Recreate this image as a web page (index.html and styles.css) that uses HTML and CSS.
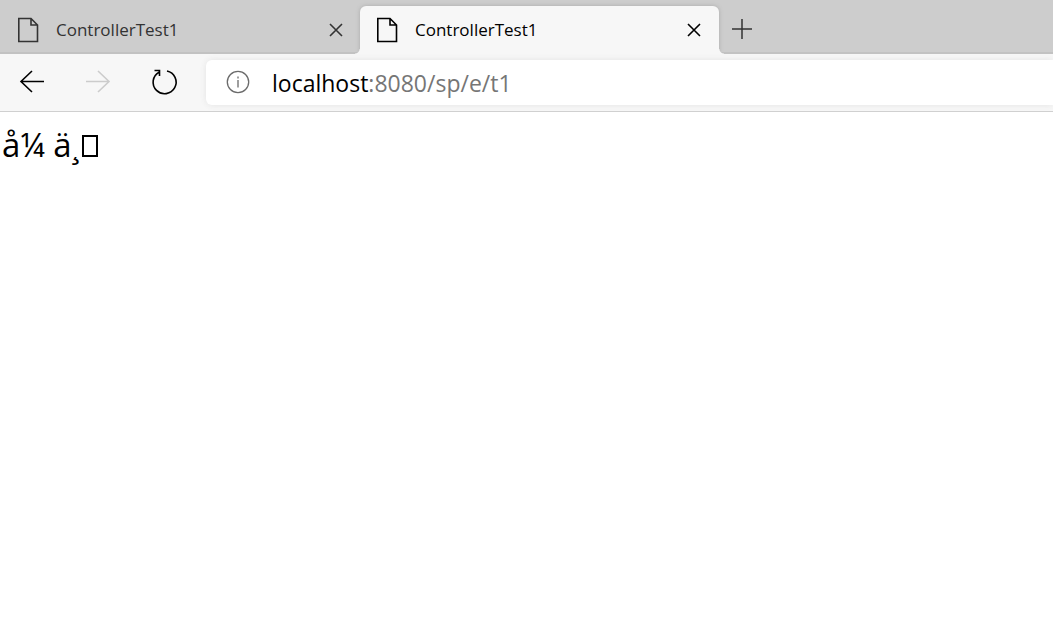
FILE: index.html
```html
<!DOCTYPE html>
<html lang="en">
<head>
<meta charset="utf-8">
<title>ControllerTest1</title>
<link rel="stylesheet" href="styles.css">
</head>
<body>
<svg class="symbols" aria-hidden="true">
  <symbol id="page" viewBox="0 0 22 26"><path d="M1.800 1.500H14L20.500 8V24.500H1.800ZM14 1.500V8H20.500"/></symbol>
  <symbol id="close" viewBox="0 0 14 14"><path d="M1 1L13 13M13 1L1 13"/></symbol>
</svg>
<header class="browser">
  <nav class="tabs" aria-label="Tabs">
    <div class="tab">
      <svg class="page-icon"><use href="#page"/></svg>
      <span class="title">ControllerTest1</span>
      <button class="close" aria-label="Close tab"><svg class="close-icon"><use href="#close"/></svg></button>
    </div>
    <div class="tab active">
      <svg class="page-icon"><use href="#page"/></svg>
      <span class="title">ControllerTest1</span>
      <button class="close" aria-label="Close tab"><svg class="close-icon"><use href="#close"/></svg></button>
    </div>
    <button class="new-tab" aria-label="New tab"><svg class="plus-icon" viewBox="0 0 20 20"><path d="M10 0V20M0 10H20"/></svg></button>
  </nav>
  <div class="toolbar">
    <div class="controls">
      <button class="tool" aria-label="Back"><svg class="tool-icon" viewBox="0 0 28 28"><path d="M26 12.500H3M14 2L3 12.500L14 23"/></svg></button>
      <button class="tool" aria-label="Forward" disabled><svg class="tool-icon" viewBox="0 0 28 28"><path d="M2 12.500H25M14 2L25 12.500L14 23"/></svg></button>
      <button class="tool" aria-label="Refresh"><svg class="tool-icon" viewBox="0 0 28 28"><path d="M17 2A11.500 11.500 0 1 1 9 3.200M4.500 1.500H9.500V7"/></svg></button>
    </div>
    <div class="address">
      <button class="info" aria-label="Site information"><svg class="info-icon" viewBox="0 0 24 24"><circle cx="12" cy="11" r="10.700"/><path d="M12 9V16.500M12 5.500V7.500"/></svg></button>
      <div class="url" role="textbox" contenteditable="true" spellcheck="false" aria-label="Address"><span class="host">localhost</span>:8080/sp/e/t1</div>
    </div>
  </div>
</header>
<main class="content">å¼ ä¸<span class="missing" role="img" aria-label="Unknown character"></span></main>
</body>
</html>
```

FILE: styles.css
```css
* { box-sizing: border-box; }
body {
  margin: 0;
  background: #fff;
  color: #000;
  font-family: "Open Sans", "Noto Sans", sans-serif;
}
button {
  display: flex;
  align-items: center;
  justify-content: center;
  padding: 0;
  border: 0;
  background: none;
  color: inherit;
}
svg {
  display: block;
  flex: none;
  overflow: visible;
  fill: none;
  stroke: currentColor;
}
.symbols { display: none; }
.tabs {
  display: flex;
  height: 54px;
  padding-top: 6px;
  background: linear-gradient(#cdcdcd 52px, #c2c2c2 52px);
  color: #333;
}
.tab {
  display: flex;
  align-items: center;
  flex: 0 1 360px;
  min-width: 0;
  padding: 0 16px 0 17px;
}
.active {
  position: relative;
  flex-basis: 359px;
  padding: 0 17px 0 16px;
  border-radius: 6px 6px 0 0;
  background: #f7f7f7;
  box-shadow: 0 0 4px #aaa;
  clip-path: inset(-6px -6px 0 -6px);
  color: #000;
}
.active::before,
.active::after {
  content: "";
  position: absolute;
  bottom: 0;
  width: 5px;
  height: 5px;
}
.active::before {
  right: 100%;
  background: radial-gradient(circle at 0 0, transparent 4px, #f7f7f7 5px);
}
.active::after {
  left: 100%;
  background: radial-gradient(circle at 100% 0, transparent 4px, #f7f7f7 5px);
}
.page-icon {
  width: 22px;
  height: 26px;
  stroke-width: 1.6;
}
.title {
  flex: 1;
  overflow: hidden;
  margin-left: 17px;
  font-size: 17px;
  line-height: 24px;
  white-space: nowrap;
}
.close { width: 16px; height: 24px; }
.close-icon { width: 14px; height: 14px; stroke-width: 1.6; }
.new-tab { width: 46px; height: 46px; }
.plus-icon { width: 20px; height: 20px; stroke-width: 1.5; }
.toolbar {
  display: flex;
  height: 58px;
  padding: 6px 0;
  border-bottom: 1px solid #d0d0d0;
  background: #f7f7f7;
}
.controls {
  display: flex;
  align-items: center;
  gap: 38px;
  padding: 0 28px 0 18px;
}
.tool { width: 28px; height: 28px; }
.tool:disabled { color: #ccc; }
.tool-icon { width: 28px; height: 28px; stroke-width: 1.6; }
.address {
  display: flex;
  align-items: center;
  flex: 1;
  min-width: 0;
  padding-left: 20px;
  border-radius: 6px 0 0 6px;
  background: #fff;
  box-shadow: 0 0 6px #e4e4e4;
}
.info { color: #6b6b6b; }
.info-icon { width: 24px; height: 24px; stroke-width: 1.3; }
.url {
  flex: 1;
  overflow: hidden;
  margin-left: 22px;
  color: #767676;
  font-size: 23px;
  line-height: 32px;
  white-space: nowrap;
}
.host { color: #000; }
.content {
  padding: 10px 2px;
  font-size: 33px;
  line-height: 46px;
}
.missing {
  display: inline-block;
  width: 16px;
  height: 22px;
  margin-left: 3px;
  border: 2px solid #000;
}
```
